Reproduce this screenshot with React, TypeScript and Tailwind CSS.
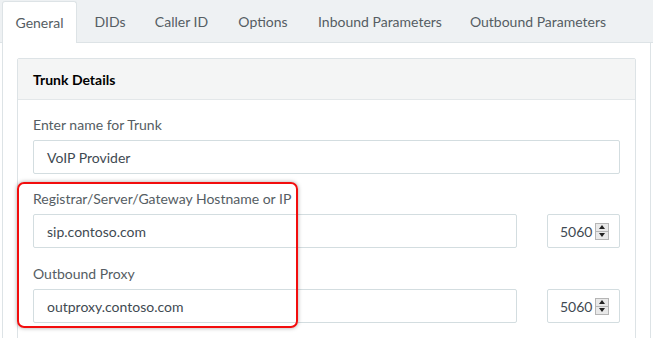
import React from 'react';

const tabs = [
  { label: 'General', w: 'w-[75px]', active: true },
  { label: 'DIDs', w: 'w-[66px]' },
  { label: 'Caller ID', w: 'w-[77px]' },
  { label: 'Options', w: 'w-[86px]' },
  { label: 'Inbound Parameters', w: 'w-[148px]' },
  { label: 'Outbound Parameters', w: 'w-[168px]' },
];

function Spinner() {
  return (
    <div className="flex flex-col w-[14px] h-[17px] border border-[#b5b5b5] bg-[#e9e9e9]">
      <div className="flex-1 flex items-center justify-center border-b border-[#b5b5b5]">
        <div className="w-0 h-0 border-l-[3px] border-r-[3px] border-b-[4px] border-l-transparent border-r-transparent border-b-[#222]" />
      </div>
      <div className="flex-1 flex items-center justify-center">
        <div className="w-0 h-0 border-l-[3px] border-r-[3px] border-t-[4px] border-l-transparent border-r-transparent border-t-[#222]" />
      </div>
    </div>
  );
}

function TextInput({ value, className = '' }: { value: string; className?: string }) {
  return (
    <div className={`h-[34px] border border-[#d3dde0] rounded-[2px] bg-white flex items-center px-[13px] text-[14px] text-[#3f4a52] ${className}`}>
      {value}
    </div>
  );
}

function PortInput() {
  return (
    <div className="w-[73px] h-[34px] border border-[#d3dde0] rounded-[2px] bg-white flex items-center pl-[12px] gap-[3px] text-[14px] text-[#3f4a52]">
      <span>5060</span>
      <Spinner />
    </div>
  );
}

export default function App() {
  return (
    <div className="w-[653px] h-[338px] overflow-hidden bg-white font-['Lato','Liberation_Sans',sans-serif]">
      {/* tab bar */}
      <div className="h-[43px] bg-[#eef1f3] border-b border-[#dde3e6] flex items-end pl-[2px]">
        {tabs.map((t) => (
          <div
            key={t.label}
            className={`${t.w} h-[41px] flex items-center justify-center text-[14px] text-[#555d63] ${
              t.active ? 'bg-white border border-b-0 border-[#dde3e6] rounded-t-[3px] -mb-px h-[42px]' : ''
            }`}
          >
            {t.label}
          </div>
        ))}
      </div>

      {/* panel */}
      <div className="mx-[2px] border-x border-[#dde3e6] h-[295px] px-[14px] pt-[15px]">
        <div className="border border-[#dde3e6] rounded-t-[2px] h-[300px]">
          <div className="h-[41px] bg-[#f4f5f5] border-b border-[#e3e7e9] flex items-center pl-[15px] text-[14px] font-bold text-black">
            Trunk Details
          </div>
          <div className="px-[15px] pt-[15px]">
            <div className="text-[14px] text-[#555d63] leading-[20px]">Enter name for Trunk</div>
            <TextInput value="VoIP Provider" className="mt-[5px] w-[587px]" />

            <div className="relative">
              <div className="absolute left-[-16px] top-[8px] w-[281px] h-[146px] border-2 border-[#f20d0d] rounded-[7px] shadow-[0_0_4px_rgba(0,0,0,0.35)] pointer-events-none" />
              <div className="pt-[15px] text-[14px] text-[#555d63] leading-[20px]">Registrar/Server/Gateway Hostname or IP</div>
              <div className="mt-[5px] flex items-center gap-[30px]">
                <TextInput value="sip.contoso.com" className="w-[484px]" />
                <PortInput />
              </div>
              <div className="pt-[16px] text-[14px] text-[#555d63] leading-[20px]">Outbound Proxy</div>
              <div className="mt-[5px] flex items-center gap-[30px]">
                <TextInput value="outproxy.contoso.com" className="w-[484px]" />
                <PortInput />
              </div>
            </div>
          </div>
        </div>
      </div>
    </div>
  );
}
